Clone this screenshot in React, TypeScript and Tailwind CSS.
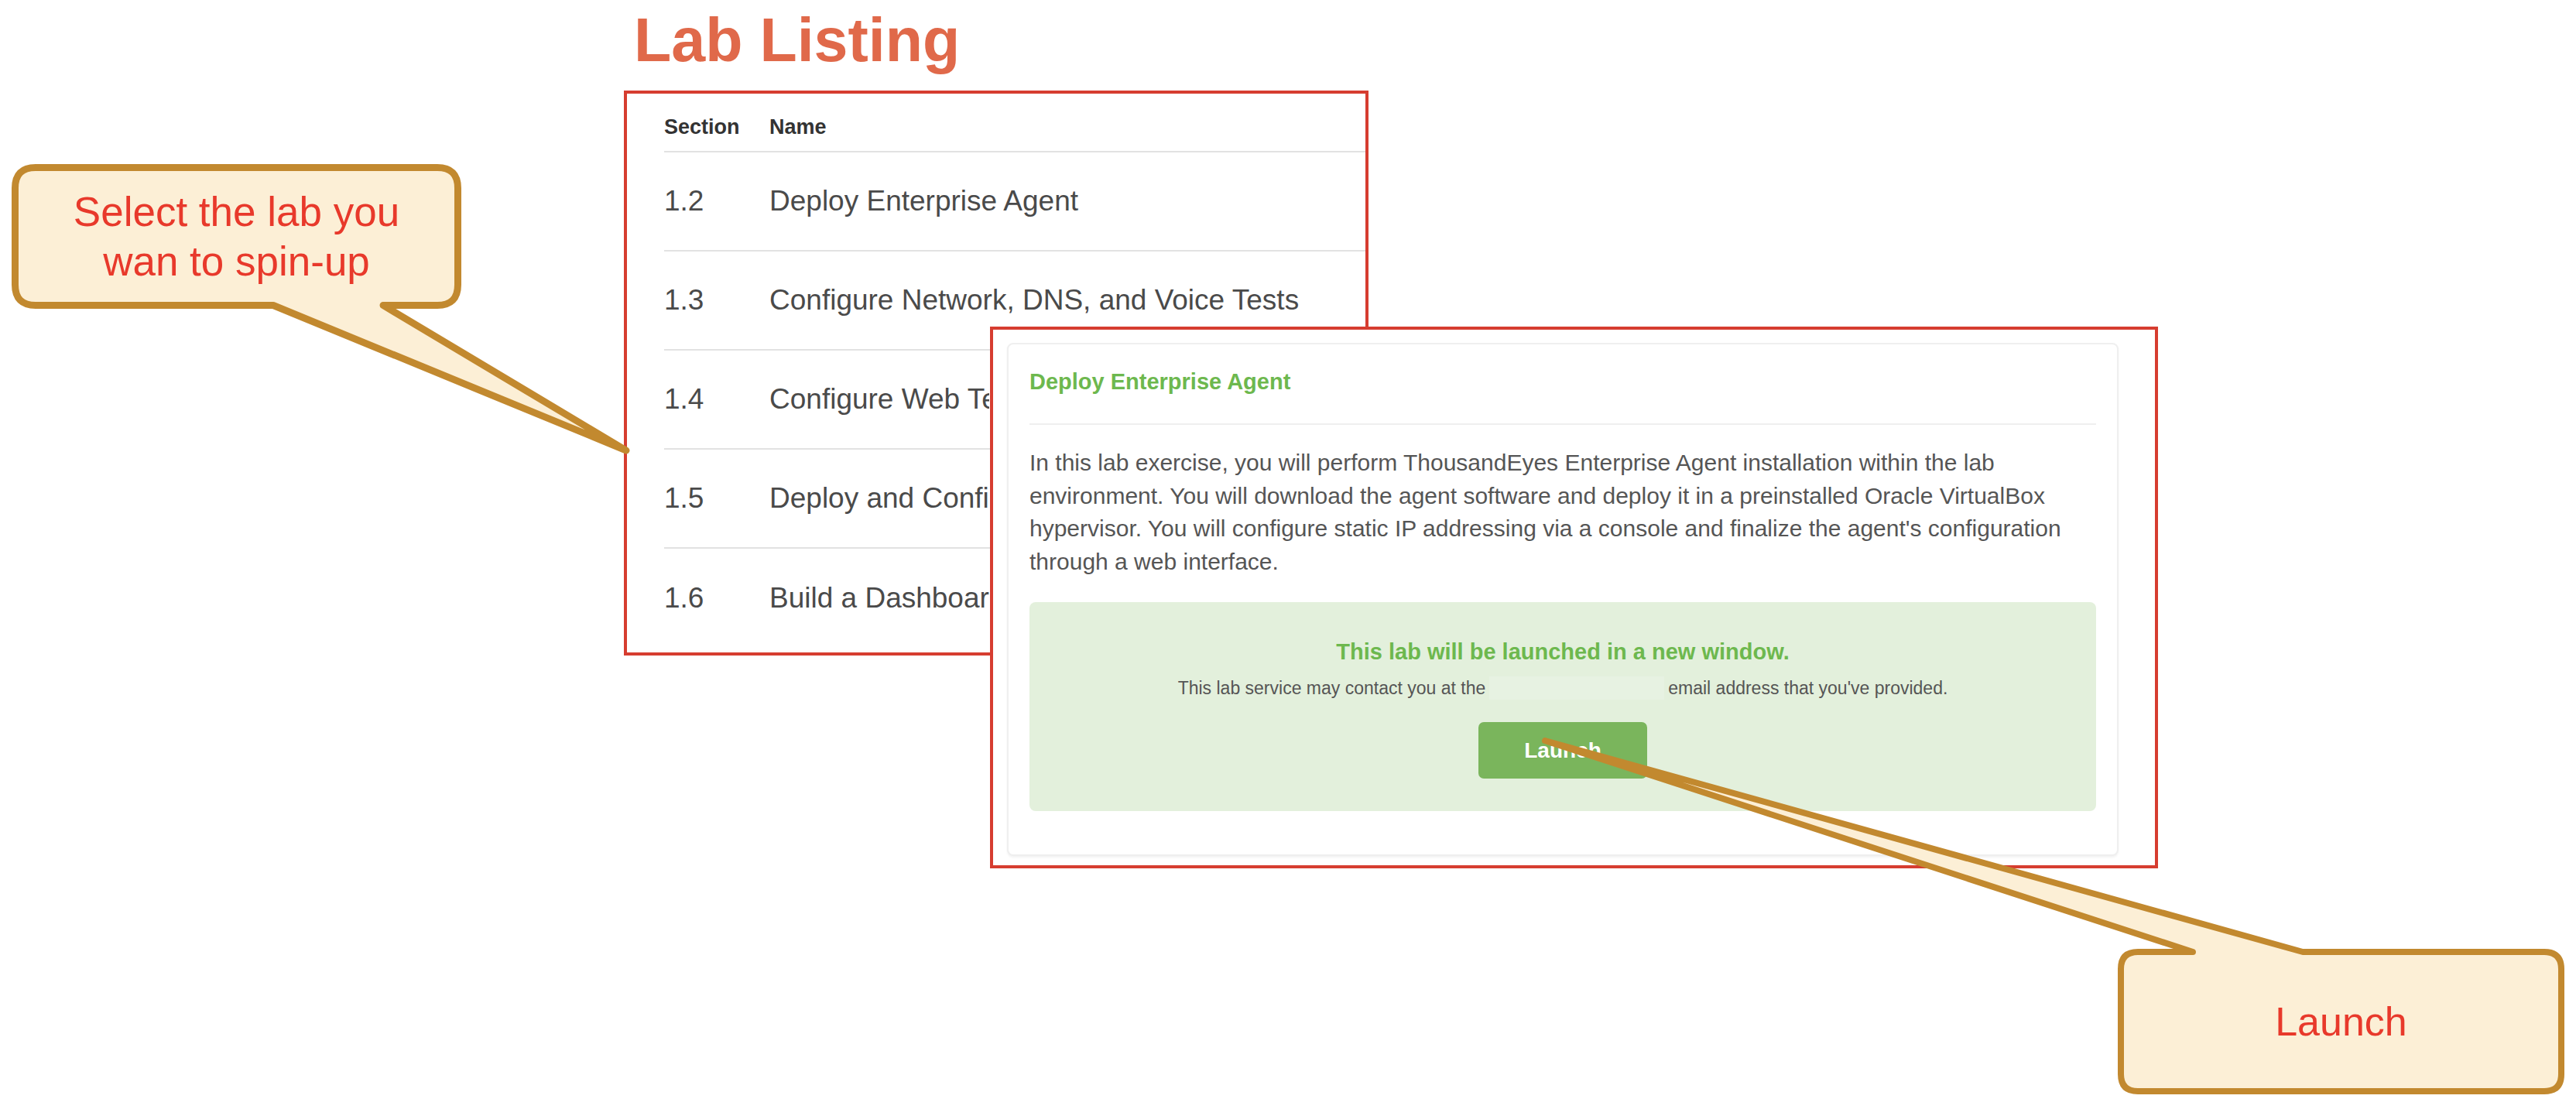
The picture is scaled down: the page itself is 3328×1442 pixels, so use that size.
const labs = [
    { section: "1.2", name: "Deploy Enterprise Agent", hidden: false },
    { section: "1.3", name: "Configure Network, DNS, and Voice Tests", hidden: false },
    { section: "1.4", name: "Configure Web Tests", hidden: true },
    { section: "1.5", name: "Deploy and Configure Endpoint Agent", hidden: true },
    { section: "1.6", name: "Build a Dashboard", hidden: true },
]

// rows sitting under the dialog get cut at its left edge
const LabTable = () => {
    return (
        <div className="w-[962px] h-[730px] border-4 border-[#d63d30] pl-[48px] overflow-hidden">
            <div className="flex items-center h-[76px] pt-[13px] border-b-2 border-[#e2e2e2] text-[27px] font-bold text-[#333333]">
                <span className="w-[136px]">Section</span>
                <span>Name</span>
            </div>
            {labs.map((lab, i) => (
                <div
                    key={lab.section}
                    className={
                        i < labs.length - 1
                            ? "flex items-center h-[128px] border-b-2 border-[#e2e2e2] text-[37px] text-[#4a4a4a] whitespace-nowrap"
                            : "flex items-center h-[128px] text-[37px] text-[#4a4a4a] whitespace-nowrap"
                    }
                >
                    <span className="w-[136px] shrink-0">{lab.section}</span>
                    <span className={lab.hidden ? "block max-w-[284px] overflow-hidden" : "block"}>{lab.name}</span>
                </div>
            ))}
        </div>
    )
}

const LaunchDialog = () => {
    return (
        <div className="absolute left-[1279px] top-[422px] w-[1509px] h-[700px] border-4 border-[#d63d30] bg-white pl-[18px] pt-[17px]">
            <div className="w-[1436px] h-[663px] border-2 border-[#efefef] rounded-[8px] bg-white shadow-[0_2px_3px_rgba(0,0,0,0.05)] px-[27px]">
                <div className="pt-[30px] pb-[36px] border-b-2 border-[#efefef] text-[29px] leading-[36px] font-bold text-[#6db84e]">
                    Deploy Enterprise Agent
                </div>
                <p className="mt-[28px] text-[30px] leading-[42.5px] text-[#555555] whitespace-nowrap">
                    In this lab exercise, you will perform ThousandEyes Enterprise Agent installation within the lab
                    <br />
                    environment. You will download the agent software and deploy it in a preinstalled Oracle VirtualBox
                    <br />
                    hypervisor. You will configure static IP addressing via a console and finalize the agent's configuration
                    <br />
                    through a web interface.
                </p>
                <div className="mt-[31px] h-[270px] rounded-[8px] bg-[#e3f0dc] flex flex-col items-center pt-[46px]">
                    <div className="text-[29px] leading-[36px] font-bold text-[#6db84e]">
                        This lab will be launched in a new window.
                    </div>
                    <div className="mt-[14px] flex items-center text-[23px] leading-[30px] text-[#555555] whitespace-nowrap">
                        <span>This lab service may contact you at the</span>
                        <span className="inline-block w-[226px] h-[30px] mx-[5px] bg-[#e7f2e2]"></span>
                        <span>email address that you've provided.</span>
                    </div>
                    <button className="mt-[29px] w-[218px] h-[73px] rounded-[7px] bg-[#7ab55c] text-white text-[28px] font-bold">
                        Launch
                    </button>
                </div>
            </div>
        </div>
    )
}

const Callouts = () => {
    return (
        <>
            <svg className="absolute left-0 top-0 pointer-events-none" width="3328" height="1442" viewBox="0 0 3328 1442">
                <path
                    d="M46 216.5 H565 Q591.5 216.5 591.5 243 V368 Q591.5 394.5 565 394.5 H495 L809 582 L353 394.5 H46 Q19.5 394.5 19.5 368 V243 Q19.5 216.5 46 216.5 Z"
                    fill="#fcefd6"
                    stroke="#c2892f"
                    strokeWidth="9"
                    strokeLinejoin="round"
                />
                <path
                    d="M2762 1230 H2833 L1996 957 L2975 1230 H3287 Q3309 1230 3309 1252 V1388 Q3309 1410 3287 1410 H2762 Q2740 1410 2740 1388 V1252 Q2740 1230 2762 1230 Z"
                    fill="#fcefd6"
                    stroke="#c2892f"
                    strokeWidth="8"
                    strokeLinejoin="round"
                />
            </svg>
            <div className="absolute left-[15px] top-[212px] w-[581px] h-[187px] flex items-center justify-center text-center text-[53px] leading-[64px] text-[#e8392b]">
                Select the lab you
                <br />
                wan to spin-up
            </div>
            <div className="absolute left-[2736px] top-[1226px] w-[577px] h-[188px] flex items-center justify-center text-[52px] text-[#e8392b]">
                Launch
            </div>
        </>
    )
}

export default function App() {
    return (
        <div className="relative w-[3328px] h-[1442px] overflow-hidden bg-white font-['Liberation_Sans',Arial,sans-serif]">
            <div className="pl-[806px] pt-[12px]">
                <h1 className="ml-[13px] text-[79px] leading-[79px] font-bold text-[#e0694a]">Lab Listing</h1>
                <div className="mt-[26px]">
                    <LabTable />
                </div>
            </div>
            <LaunchDialog />
            <Callouts />
        </div>
    )
}
